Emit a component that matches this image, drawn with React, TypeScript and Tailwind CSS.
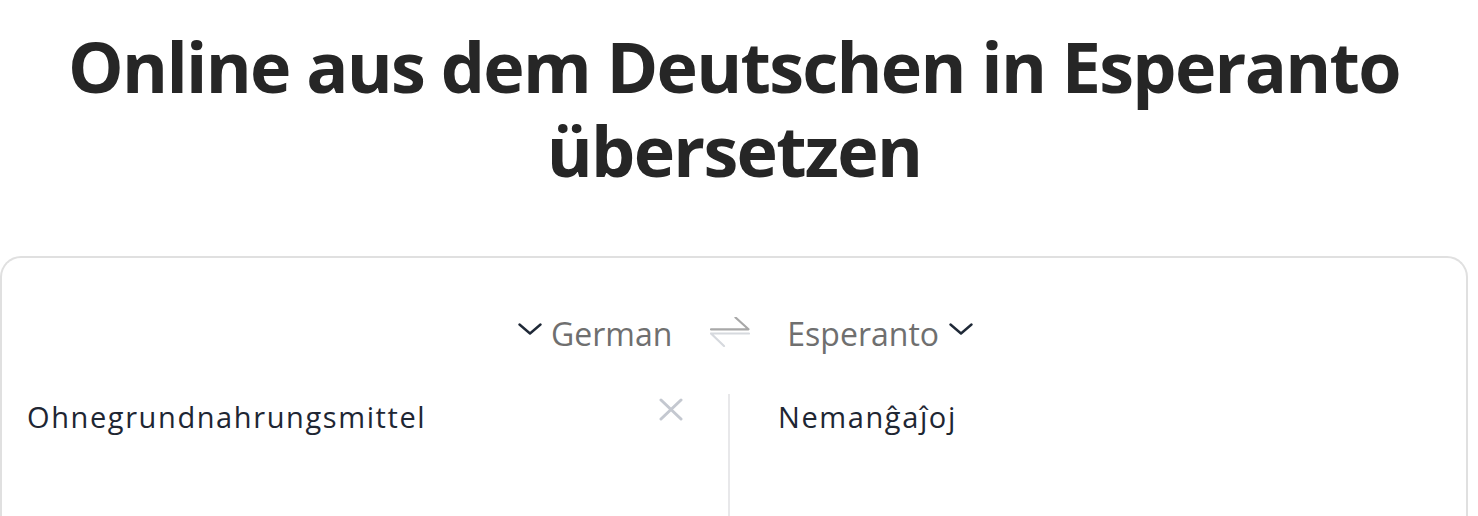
import React from "react";

function Chevron() {
  return (
    <svg width="24" height="12" viewBox="0 0 24 12" className="block">
      <path d="M1.5 1.5 L12 10.5 L22.5 1.5" fill="none" stroke="#1f2937" strokeWidth="2.4" strokeLinecap="round" strokeLinejoin="round" />
    </svg>
  );
}

export default function App() {
  return (
    <div className="w-[1478px] h-[516px] overflow-hidden bg-white" style={{ fontFamily: '"Open Sans", sans-serif' }}>
      <div className="w-[1468px]">
        <h1 className="pt-[24px] text-center text-[70px] leading-[84px] font-bold tracking-[-1.7px] text-[#262626]">
          Online aus dem Deutschen in Esperanto
          <br />
          übersetzen
        </h1>
        <div className="mt-[64px] h-[300px] rounded-[21px] border-2 border-[#e0e0e0] border-b-0">
          <div className="flex items-start justify-center pl-[23px] pt-[54px] text-[32px] leading-[44px] text-[#6f6f6f]">
            <div className="mt-[11px] mr-[9px]">
              <Chevron />
            </div>
            <span>German</span>
            <svg width="40" height="30" viewBox="0 0 40 30" className="block mt-[5px] ml-[38px] mr-[37px]">
              <path d="M1 16.5 H39 M1 16.5 L14 29" fill="none" stroke="#d6d9de" strokeWidth="2.2" strokeLinecap="round" strokeLinejoin="round" />
              <path d="M1 12.3 H38.5 L25.5 0.5" fill="none" stroke="#a8a8a8" strokeWidth="2.2" strokeLinecap="round" strokeLinejoin="round" />
            </svg>
            <span>Esperanto</span>
            <div className="mt-[11px] ml-[10px]">
              <Chevron />
            </div>
          </div>
          <div className="flex mt-[38px]">
            <div className="w-[726px] flex justify-between pl-[25px] pr-[45px] pt-[3px] text-[29px] leading-[40px] tracking-[1.6px] text-[#1e2633]">
              <span>Ohnegrundnahrungsmittel</span>
              <svg width="24" height="23" viewBox="0 0 24 23" className="block mt-[1px]">
                <path d="M2 2 L22 21 M22 2 L2 21" stroke="#c4c8d0" strokeWidth="3" strokeLinecap="round" />
              </svg>
            </div>
            <div className="w-[2px] bg-[#e8e8ea] h-[130px]" />
            <div className="pl-[48px] pt-[3px] text-[29px] leading-[40px] tracking-[1.6px] text-[#1e2633]">Nemanĝaĵoj</div>
          </div>
        </div>
      </div>
    </div>
  );
}
